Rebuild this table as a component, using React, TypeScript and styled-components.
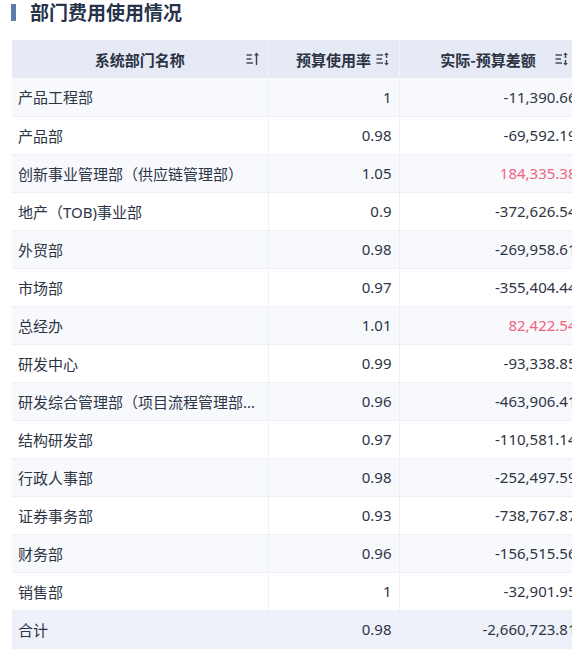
import React from "react";
import styled, { createGlobalStyle } from "styled-components";

const Global = createGlobalStyle`
  html, body { margin: 0; padding: 0; background: #ffffff; overflow: hidden; }
  body { font-family: "Noto Sans", "Noto Sans CJK SC", sans-serif; }
`;

const Page = styled.div`
  width: 600px;
  padding: 0 0 0 11px;
`;

const TitleRow = styled.div`
  display: flex;
  align-items: center;
  gap: 14px;
  height: 24px;
  margin-bottom: 16px;
`;

const TitleBar = styled.span`
  display: block;
  width: 5px;
  height: 17px;
  background: #5d7ba7;
`;

const Title = styled.h1`
  margin: 0;
  font-size: 19px;
  font-weight: 700;
  color: #27334a;
  font-family: "Noto Sans CJK SC", sans-serif;
  line-height: 24px;
`;

const Table = styled.table`
  border-collapse: collapse;
  table-layout: fixed;
  width: 572px;
  margin-left: 1px;
  font-size: 15px;
  font-family: "Noto Sans", "Noto Sans CJK SC", sans-serif;
`;

const HeadCell = styled.th<{ $iconRight: number; $shift?: number }>`
  position: relative;
  height: 38px;
  padding: 0 ${(p) => (p.$shift ? p.$shift : 0)}px 0 0;
  background: #e5eaf4;
  border-right: 1px solid #f0f3f9;
  color: #2b3344;
  font-weight: 700;
  font-family: "Noto Sans CJK SC", sans-serif;
  font-size: 15px;
  text-align: center;
  box-sizing: border-box;
  & > svg {
    position: absolute;
    top: 12px;
    right: ${(p) => p.$iconRight}px;
  }
`;

const Row = styled.tr<{ $tone: "odd" | "even" | "sum" }>`
  background: ${(p) =>
    p.$tone === "odd" ? "#f8f9fd" : p.$tone === "even" ? "#ffffff" : "#eef1f9"};
`;

const Cell = styled.td<{ $align?: "left" | "right"; $red?: boolean }>`
  height: 38px;
  box-sizing: border-box;
  padding: ${(p) => (p.$align === "right" ? "0 7px 0 6px" : "0 12px 0 6px")};
  border-bottom: 1px solid #eef0f7;
  border-right: 1px solid #eef0f7;
  text-align: ${(p) => p.$align ?? "left"};
  color: ${(p) => (p.$red ? "#ef6482" : "#2d3444")};
  white-space: nowrap;
  overflow: hidden;
  text-overflow: ellipsis;
  font-size: 15px;
  font-family: "Noto Sans", "Noto Sans CJK SC", sans-serif;
`;

const SortUp = () => (
  <svg width="14" height="14" viewBox="0 0 14 14">
    <g stroke="#3a4253" strokeWidth="1.4" fill="none" strokeLinecap="butt">
      <line x1="0.5" y1="3" x2="6" y2="3" />
      <line x1="0.5" y1="7" x2="5.5" y2="7" />
      <line x1="0.5" y1="11" x2="7" y2="11" />
      <line x1="10.5" y1="2" x2="10.5" y2="13" />
    </g>
    <path d="M10.5 0.5 L13 3.5 L8 3.5 Z" fill="#3a4253" />
  </svg>
);

const SortBoth = () => (
  <svg width="14" height="14" viewBox="0 0 14 14">
    <g stroke="#3a4253" strokeWidth="1.4" fill="none">
      <line x1="0.5" y1="3" x2="7" y2="3" />
      <line x1="0.5" y1="7" x2="6" y2="7" />
      <line x1="0.5" y1="11" x2="7" y2="11" />
      <line x1="10.5" y1="2" x2="10.5" y2="6" />
      <line x1="10.5" y1="8" x2="10.5" y2="12" />
    </g>
    <path d="M10.5 0.5 L12.8 3 L8.2 3 Z" fill="#3a4253" />
    <path d="M10.5 13.5 L12.8 11 L8.2 11 Z" fill="#3a4253" />
  </svg>
);

type Item = { name: string; rate: string; diff: string };

const rows: Item[] = [
  { name: "产品工程部", rate: "1", diff: "-11,390.66" },
  { name: "产品部", rate: "0.98", diff: "-69,592.19" },
  { name: "创新事业管理部（供应链管理部）", rate: "1.05", diff: "184,335.38" },
  { name: "地产（TOB)事业部", rate: "0.9", diff: "-372,626.54" },
  { name: "外贸部", rate: "0.98", diff: "-269,958.61" },
  { name: "市场部", rate: "0.97", diff: "-355,404.44" },
  { name: "总经办", rate: "1.01", diff: "82,422.54" },
  { name: "研发中心", rate: "0.99", diff: "-93,338.85" },
  { name: "研发综合管理部（项目流程管理部）", rate: "0.96", diff: "-463,906.41" },
  { name: "结构研发部", rate: "0.97", diff: "-110,581.14" },
  { name: "行政人事部", rate: "0.98", diff: "-252,497.59" },
  { name: "证券事务部", rate: "0.93", diff: "-738,767.87" },
  { name: "财务部", rate: "0.96", diff: "-156,515.56" },
  { name: "销售部", rate: "1", diff: "-32,901.95" },
];

export default function App() {
  return (
    <Page>
      <Global />
      <TitleRow>
        <TitleBar />
        <Title>部门费用使用情况</Title>
      </TitleRow>
      <Table>
        <colgroup>
          <col style={{ width: 256 }} />
          <col style={{ width: 131 }} />
          <col style={{ width: 185 }} />
        </colgroup>
        <thead>
          <tr>
            <HeadCell $iconRight={8}>
              系统部门名称
              <SortUp />
            </HeadCell>
            <HeadCell $iconRight={9}>
              预算使用率
              <SortBoth />
            </HeadCell>
            <HeadCell $iconRight={15} $shift={7}>
              实际-预算差额
              <SortBoth />
            </HeadCell>
          </tr>
        </thead>
        <tbody>
          {rows.map((r, i) => (
            <Row key={r.name} $tone={i % 2 === 0 ? "odd" : "even"}>
              <Cell>{r.name}</Cell>
              <Cell $align="right">{r.rate}</Cell>
              <Cell $align="right" $red={!r.diff.startsWith("-")}>
                {r.diff}
              </Cell>
            </Row>
          ))}
          <Row $tone="sum">
            <Cell>合计</Cell>
            <Cell $align="right">0.98</Cell>
            <Cell $align="right">-2,660,723.81</Cell>
          </Row>
        </tbody>
      </Table>
    </Page>
  );
}
